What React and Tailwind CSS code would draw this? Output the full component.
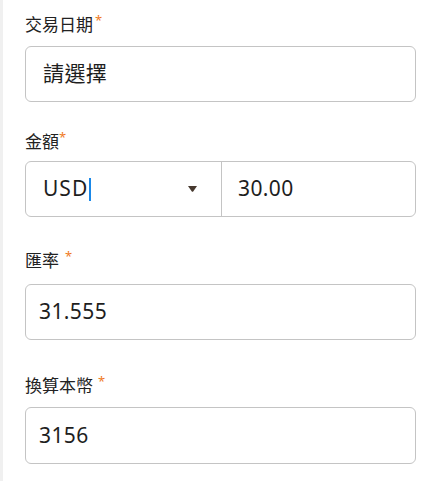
import React from "react";

const font = { fontFamily: '"Noto Sans", "Noto Sans CJK TC", sans-serif' };

const Label = ({ text, gap = "ml-[2px]", className = "" }) => (
    <div className={`flex items-start h-[24px] text-[17px] leading-[24px] text-[#222] ${className}`}>
        <span>{text}</span>
        <span className={`${gap} text-[13px] leading-[14px] text-[#f07a1e]`}>*</span>
    </div>
);

const Box = ({ children, className = "" }) => (
    <div className={`h-[56px] border border-[#c4c4c4] rounded-[6px] bg-white flex items-center text-[21px] tracking-[0.4px] text-[#1e1e1e] ${className}`}>
        {children}
    </div>
);

export default function App() {
    return (
        <div className="w-[436px] h-[481px] bg-white flex" style={font}>
            <div className="w-[3px] bg-[#f0f0f0]" />
            <div className="flex-1 pl-[22px] pr-[20px] pt-[13px]">
                <Label text="交易日期" />
                <Box className="mt-[9px] px-[17px]">請選擇</Box>

                <Label text="金額" gap="ml-0" className="mt-[28px]" />
                <Box className="mt-[7px]">
                    <div className="w-[196px] h-full flex items-center justify-between pl-[17px] pr-[24px] border-r border-[#c4c4c4]">
                        <div className="flex items-center">
                            <span className="tracking-[1px]">USD</span>
                            <span className="w-[2px] h-[23px] bg-[#1a88e8] ml-[1px]" />
                        </div>
                        <svg width="9" height="6" viewBox="0 0 9 6">
                            <path d="M0 0 L9 0 L5.2 5.4 Q4.5 6.2 3.8 5.4 Z" fill="#47392f" />
                        </svg>
                    </div>
                    <div className="pl-[16px]">30.00</div>
                </Box>

                <Label text="匯率" gap="ml-[6px]" className="mt-[32px]" />
                <Box className="mt-[11px] px-[13px]">31.555</Box>

                <Label text="換算本幣" gap="ml-[5px]" className="mt-[34px]" />
                <Box className="mt-[9px] h-[57px] px-[13px]">3156</Box>
            </div>
        </div>
    );
}
